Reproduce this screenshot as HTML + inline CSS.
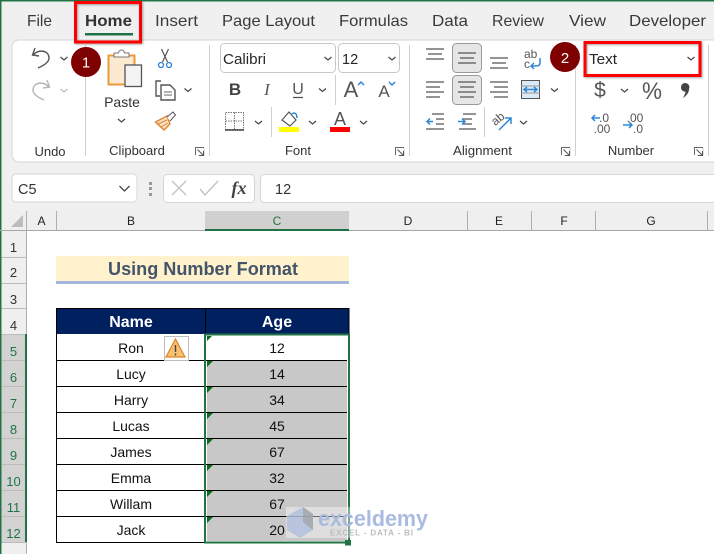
<!DOCTYPE html>
<html><head><meta charset="utf-8"><style>
html,body{margin:0;padding:0;background:#f0f0f0;overflow:hidden}
svg{display:block}
text{font-family:"Liberation Sans",sans-serif;fill:#262626}
.tab{font-size:16px;fill:#3a3a3a}
.lab{font-size:13px;text-anchor:middle;fill:#333}
.hd{font-size:12px;text-anchor:middle;fill:#222}
.rn{font-size:13px;text-anchor:middle;fill:#333}
.rg{font-size:13px;text-anchor:middle;fill:#217346}
.v{font-size:14px;text-anchor:middle;fill:#111}
.ic{fill:none;stroke:#555;stroke-width:1.4}
.bl{fill:none;stroke:#2b88d8;stroke-width:1.5}
</style></head><body>
<svg width="714" height="554" viewBox="0 0 714 554" xmlns="http://www.w3.org/2000/svg">
<defs>
<path id="c" d="M-3.5-1.5 0 1.5 3.5-1.5" fill="none" stroke="#444" stroke-width="1.2"/>
<path id="cg" d="M-3.5-1.5 0 1.5 3.5-1.5" fill="none" stroke="#bbb" stroke-width="1.2"/>
<g id="dl"><path d="M.5 8V.5H9" fill="none" stroke="#666"/><path d="M9 .5V8.5H3" fill="none" stroke="#aaa" stroke-width=".6"/><path d="M2.5 2.5 8.5 8.5M8.5 4V8.5H4" fill="none" stroke="#555"/></g>
<filter id="sh" x="-10%" y="-10%" width="120%" height="125%"><feDropShadow dx="1" dy="1" stdDeviation="1" flood-color="#000" flood-opacity=".35"/></filter>
</defs>
<rect width="714" height="554" fill="#f0f0f0"/>
<rect width="714" height="1.5" fill="#217346"/>
<rect width="1.5" height="554" fill="#217346"/>

<!-- tabs -->
<text class="tab" x="27" y="26" textLength="25" lengthAdjust="spacingAndGlyphs">File</text>
<text class="tab" x="85" y="26" textLength="47" lengthAdjust="spacingAndGlyphs" style="font-weight:bold;fill:#333">Home</text>
<text class="tab" x="155" y="26" textLength="43" lengthAdjust="spacingAndGlyphs">Insert</text>
<text class="tab" x="222" y="26" textLength="93" lengthAdjust="spacingAndGlyphs">Page Layout</text>
<text class="tab" x="339" y="26" textLength="69" lengthAdjust="spacingAndGlyphs">Formulas</text>
<text class="tab" x="432" y="26" textLength="36" lengthAdjust="spacingAndGlyphs">Data</text>
<text class="tab" x="492" y="26" textLength="52" lengthAdjust="spacingAndGlyphs">Review</text>
<text class="tab" x="569" y="26" textLength="37" lengthAdjust="spacingAndGlyphs">View</text>
<text class="tab" x="629" y="26" textLength="77" lengthAdjust="spacingAndGlyphs">Developer</text>
<rect x="85" y="33" width="48" height="2.5" fill="#217346"/>

<!-- ribbon -->
<rect x="12" y="40" width="720" height="122" rx="7" fill="#fff" stroke="#d6d6d6"/>
<g stroke="#cfcfcf"><path d="M85.500 45V156M209.500 45V156M409.500 45V156M575.500 45V156M708.500 45V156M335.500 75V105M271.500 107V137M484.500 107V137"/></g>
<text class="lab" x="50" y="156">Undo</text>
<text class="lab" x="137" y="155">Clipboard</text>
<text class="lab" x="298" y="155">Font</text>
<text class="lab" x="453" y="155" textLength="59" lengthAdjust="spacingAndGlyphs" style="text-anchor:start">Alignment</text>
<text class="lab" x="631" y="155">Number</text>
<use href="#dl" x="195" y="147"/><use href="#dl" x="395" y="147"/><use href="#dl" x="561" y="147"/><use href="#dl" x="694" y="147"/>

<!-- undo/redo -->
<path class="ic" d="M35 48 32.500 55 39 56M33 55C38 49 49 50 49 58 49 62 45 65 38 68"/>
<use href="#c" x="64" y="58.500"/>
<path d="M47 80 49.500 87 43 88M49 87C44 81 33 82 33 90 33 94 37 97 44 100" fill="none" stroke="#b5b5b5" stroke-width="1.4"/>
<use href="#cg" x="64" y="90.500"/>

<!-- paste -->
<rect x="108.500" y="55.500" width="26" height="29" fill="#fbe9d0" stroke="#e89a3c" stroke-width="2"/>
<path d="M114 55V53h4.500a3 3 0 0 1 6 0H129v4h-15z" fill="#fff" stroke="#777"/>
<rect x="125" y="65" width="16.500" height="21.500" fill="#f3f3f3" stroke="#555" stroke-width="1.300"/>
<text class="lab" x="122" y="107" style="font-size:14px">Paste</text>
<use href="#c" x="121.500" y="120.500"/>
<!-- scissors -->
<path d="M161.500 49 167.500 62M168.500 49 162.500 62" stroke="#555" fill="none" stroke-width="1.200"/>
<circle cx="161" cy="65" r="2.500" fill="none" stroke="#2b7cd3" stroke-width="1.300"/><circle cx="169" cy="65" r="2.500" fill="none" stroke="#2b7cd3" stroke-width="1.300"/>
<!-- copy -->
<path class="ic" d="M161 81H156V96H160M165 85H170L175 90V100H161V85z"/><path d="M164 92h8M164 95h8" stroke="#666"/><use href="#c" x="188" y="90"/>
<!-- brush -->
<path d="M155.500 122 167 116 170 124 164 130z" fill="#fbe3c8" stroke="#e0812c" stroke-width="1.400"/>
<path d="M158 124 167 120M161 127 168 123" stroke="#e0812c" stroke-width="1"/>
<path d="M167 117 173 112 175.500 115 170 121" fill="#fff" stroke="#555"/>

<!-- font -->
<rect x="220.500" y="43.500" width="115" height="29" rx="4" fill="#fff" stroke="#c8c8c8"/>
<rect x="338.500" y="43.500" width="61" height="29" rx="4" fill="#fff" stroke="#c8c8c8"/>
<text x="223" y="64" style="font-size:14.500px" textLength="43" lengthAdjust="spacingAndGlyphs">Calibri</text>
<text x="342" y="64" style="font-size:14.500px">12</text>
<use href="#c" x="328" y="58.500"/><use href="#c" x="392" y="58.500"/>
<text x="235" y="95" style="font-size:17px;font-weight:bold;text-anchor:middle;fill:#444">B</text>
<text x="267" y="95" style="font-size:17px;font-style:italic;text-anchor:middle;fill:#555;font-family:'Liberation Serif',serif">I</text>
<text x="298" y="94" style="font-size:16px;text-anchor:middle;fill:#555">U</text>
<path d="M293 97.500h10" stroke="#555" stroke-width="1.300"/>
<use href="#c" x="322.500" y="90"/>
<text x="351" y="97" style="font-size:22px;text-anchor:middle;fill:#555">A</text>
<path d="M358 85 361 82 364 85" class="bl"/>
<text x="384" y="97" style="font-size:17px;text-anchor:middle;fill:#555">A</text>
<path d="M389 82 392 85 395 82" class="bl"/>
<!-- borders -->
<path d="M225.500 112.500h18v17h-18zM234.500 112.500v17M225.500 121h18" fill="none" stroke="#777" stroke-dasharray="1.500 1"/>
<path d="M225 130h19" stroke="#444" stroke-width="1.500"/>
<use href="#c" x="258.500" y="122.500"/>
<path d="M282 120 289 112 296 120 290 126z" fill="#fff" stroke="#555" stroke-width="1.200"/>
<path d="M292 114C294 112 297 113 297 118" class="bl"/>
<rect x="279" y="127" width="20" height="5" fill="#ff0"/>
<use href="#c" x="312.500" y="122.500"/>
<text x="340" y="125" style="font-size:18px;text-anchor:middle;fill:#555">A</text>
<rect x="330" y="127" width="20" height="5" fill="#f00"/>
<use href="#c" x="363.500" y="122.500"/>

<!-- alignment -->
<rect x="452.500" y="43.500" width="29" height="29" rx="4" fill="#e6e6e6" stroke="#999"/>
<rect x="452.500" y="75.500" width="29" height="29" rx="4" fill="#e6e6e6" stroke="#999"/>
<g stroke="#555" stroke-width="1.300" fill="none">
<path d="M426 49h18M428 54h14M426 59h18"/>
<path d="M458 53h18M460 58h14M458 63h18"/>
<path d="M490 58h18M492 63h14M490 68h18"/>
<path d="M426 82h18M426 87h14M426 92h18M426 97h14"/>
<path d="M458 82h18M460 87h14M458 92h18M460 97h14"/>
<path d="M490 82h18M494 87h14M490 92h18M494 97h14"/>
<path d="M432 114h12M436 119h8M436 124h8M426 129h18"/>
<path d="M463 114h13M463 119h9M463 124h9M459 129h17"/>
</g>
<path class="bl" d="M433 121.500h-6M430 118.500l-3 3 3 3"/>
<path class="bl" d="M458 121.500h7M462 118.500l3 3-3 3"/>
<text x="524" y="58" style="font-size:12px;fill:#555">ab</text>
<text x="524" y="68" style="font-size:12px;fill:#555">c</text>
<path class="bl" d="M540 58V63Q540 66 536 66H531M534 63l-3 3 3 3"/>
<rect x="521.500" y="80.500" width="18" height="18" fill="#dbeaf7" stroke="#555"/>
<path d="M521 86h19M521 93h19" stroke="#999"/>
<path class="bl" d="M524 89.500h13M527 87l-3 2.500 3 2.500M534 87l3 2.500-3 2.500"/>
<use href="#c" x="554.500" y="90"/>
<text x="493" y="124" style="font-size:12px;fill:#555" transform="rotate(-40 497 122)">ab</text>
<path class="bl" d="M499 130 511 118M505 118h6v6"/>
<use href="#c" x="523.500" y="122.500"/>

<!-- number -->
<text x="600" y="97" style="font-size:21px;text-anchor:middle;fill:#555">$</text>
<use href="#c" x="624.500" y="90.500"/>
<text x="642" y="99" style="font-size:24px;fill:#555" textLength="20" lengthAdjust="spacingAndGlyphs">%</text>
<path d="M681 87.500a4.200 4.200 0 1 1 8 1.500C689 93 686 96 683 98 684.500 95 685.500 93 685.500 91.700 683 91.700 681 90 681 87.500z" fill="#444"/>
<text x="604" y="122" style="font-size:12px;fill:#555;text-anchor:middle">.0</text>
<text x="602" y="133" style="font-size:12px;fill:#555;text-anchor:middle">.00</text>
<path class="bl" d="M592 118h8M595 115l-3 3 3 3"/>
<text x="635" y="122" style="font-size:12px;fill:#555;text-anchor:middle">.00</text>
<text x="638" y="133" style="font-size:12px;fill:#555;text-anchor:middle">.0</text>
<path class="bl" d="M623 125h9M629 122l3 3-3 3"/>

<!-- number format box -->
<rect x="585" y="43" width="115" height="32" fill="#fff"/>
<text x="589" y="64" style="font-size:14.500px" textLength="28" lengthAdjust="spacingAndGlyphs">Text</text>
<use href="#c" x="691" y="58.500"/>
<rect x="585" y="42.500" width="115" height="33" fill="none" stroke="#f00" stroke-width="3" filter="url(#sh)"/>
<rect x="75.500" y="2.500" width="65" height="39.500" fill="none" stroke="#f00" stroke-width="3" filter="url(#sh)"/>

<!-- badges -->
<circle cx="86" cy="62" r="15" fill="#7f0000"/>
<text x="86" y="67.500" style="font-size:15px;fill:#fff;text-anchor:middle">1</text>
<circle cx="565" cy="57" r="15" fill="#7f0000"/>
<text x="565" y="63" style="font-size:15px;fill:#fff;text-anchor:middle">2</text>

<!-- formula bar -->
<rect x="12" y="174" width="125" height="28" rx="4" fill="#fff" stroke="#d6d6d6"/>
<text x="18" y="194" style="font-size:14.500px;fill:#333">C5</text>
<path d="M119.500 186 124.500 191 129.500 186" fill="none" stroke="#444" stroke-width="1.300"/>
<g fill="#999"><rect x="149" y="182" width="3" height="3"/><rect x="149" y="187" width="3" height="3"/><rect x="149" y="193" width="3" height="3"/></g>
<rect x="163.500" y="174.500" width="91" height="28" rx="4" fill="#fff" stroke="#d6d6d6"/>
<path d="M172 181 186 195M186 181 172 195" stroke="#c4c4c4" stroke-width="1.400" fill="none"/>
<path d="M200 189 205 195 218 181" stroke="#c4c4c4" stroke-width="1.400" fill="none"/>
<text x="239" y="194" style="font-size:18px;font-style:italic;font-weight:bold;text-anchor:middle;fill:#444;font-family:'Liberation Serif',serif">fx</text>
<rect x="260.500" y="174.500" width="470" height="28" rx="4" fill="#fff" stroke="#d6d6d6"/>
<text x="275" y="194" style="font-size:14.500px;fill:#333">12</text>

<!-- sheet -->
<rect x="26" y="231" width="688" height="323" fill="#fff"/>
<rect x="1.500" y="211" width="712.500" height="20" fill="#efefef"/>
<rect x="205" y="211" width="144" height="19" fill="#d0d0d0"/>
<rect x="205" y="229" width="144" height="2" fill="#217346"/>
<path d="M0 230.500H205M349 230.500H714" stroke="#a8a8a8"/>
<g stroke="#b0b0b0"><path d="M26.500 211V554M56.500 211V230M467.500 211V230M531.500 211V230M595.500 211V230M707.500 211V230"/></g>
<path d="M11 227H23V215z" fill="#bcbcbc"/>
<text class="hd" x="41.500" y="225">A</text><text class="hd" x="131" y="225">B</text>
<text class="hd" x="277" y="225" style="fill:#217346">C</text><text class="hd" x="408" y="225">D</text>
<text class="hd" x="499" y="225">E</text><text class="hd" x="564" y="225">F</text><text class="hd" x="651" y="225">G</text>

<!-- row headers -->
<rect x="1.500" y="231" width="24.500" height="323" fill="#efefef"/>
<rect x="1.500" y="334" width="24.500" height="208" fill="#d2d2d2"/>
<rect x="25" y="334" width="2" height="208" fill="#217346"/>
<g stroke="#bcbcbc"><path d="M1.500 257.500H26M1.500 283.500H26M1.500 308.500H26M1.500 334.500H25M1.500 360.500H25M1.500 386.500H25M1.500 412.500H25M1.500 438.500H25M1.500 464.500H25M1.500 490.500H25M1.500 516.500H25M1.500 542.500H26"/></g>
<text class="rn" x="13.500" y="252">1</text><text class="rn" x="13.500" y="277">2</text><text class="rn" x="13.500" y="304">3</text><text class="rn" x="13.500" y="330">4</text>
<text class="rg" x="13.500" y="356">5</text><text class="rg" x="13.500" y="382">6</text><text class="rg" x="13.500" y="408">7</text><text class="rg" x="13.500" y="434">8</text><text class="rg" x="13.500" y="460">9</text><text class="rg" x="13.500" y="486">10</text><text class="rg" x="13.500" y="512">11</text><text class="rg" x="13.500" y="538">12</text>

<!-- title -->
<rect x="56" y="256" width="293" height="26" fill="#fff2cc"/>
<rect x="56" y="281" width="293" height="3" fill="#a4b6dd"/>
<text x="203" y="275" style="font-size:18px;font-weight:bold;text-anchor:middle;fill:#44546a" textLength="190" lengthAdjust="spacingAndGlyphs">Using Number Format</text>

<!-- table -->
<rect x="56" y="308" width="293" height="26" fill="#002060"/>
<path d="M56 308.500H349" stroke="#000"/>
<text x="131" y="327" style="font-size:16px;font-weight:bold;text-anchor:middle;fill:#fff">Name</text>
<text x="277" y="327" style="font-size:16px;font-weight:bold;text-anchor:middle;fill:#fff">Age</text>
<rect x="207" y="360" width="140" height="181" fill="#c8c8c8"/>
<g stroke="#000"><path d="M56.500 308V543M205.500 308V334M349 308V334M56 360.500H347M56 386.500H347M56 412.500H347M56 438.500H347M56 464.500H347M56 490.500H347M56 516.500H347M56 542.500H204"/></g>
<g fill="#0c6b1c"><path d="M207 336h5l-5 5zM207 361h6l-6 6zM207 387h6l-6 6zM207 413h6l-6 6zM207 439h6l-6 6zM207 465h6l-6 6zM207 491h6l-6 6zM207 517h6l-6 6z"/></g>
<text class="v" x="131" y="353">Ron</text><text class="v" x="131" y="379">Lucy</text><text class="v" x="131" y="405">Harry</text><text class="v" x="131" y="431">Lucas</text><text class="v" x="131" y="457">James</text><text class="v" x="131" y="483">Emma</text><text class="v" x="131" y="509">Willam</text><text class="v" x="131" y="535">Jack</text>
<text class="v" x="277" y="353">12</text><text class="v" x="277" y="379">14</text><text class="v" x="277" y="405">34</text><text class="v" x="277" y="431">45</text><text class="v" x="277" y="457">67</text><text class="v" x="277" y="483">32</text><text class="v" x="277" y="509">67</text><text class="v" x="277" y="535">20</text>

<!-- warning -->
<rect x="164.500" y="336.500" width="24" height="24" fill="#fff" stroke="#bdbdbd"/>
<path d="M175.500 339 185 357H166z" fill="#f8c070" stroke="#e0812c" stroke-width="1.200"/>
<path d="M175.500 345V352M175.500 353.500V355.500" stroke="#444" stroke-width="1.400"/>

<!-- selection -->
<rect x="205" y="334.500" width="144" height="208" fill="none" stroke="#217346" stroke-width="2"/>
<rect x="345" y="540" width="6" height="5.500" fill="#217346"/>

<!-- watermark -->
<rect x="286" y="507" width="142" height="31" fill="#fff" fill-opacity=".4"/>
<path d="M287 516 303 507 313 514V530L300 538 287 530z" fill="#a9bbdc" fill-opacity=".7"/>
<path d="M303 507 313 514V530L303 522z" fill="#9a9a9a" fill-opacity=".6"/>
<text x="318" y="526" style="font-size:22px;font-weight:bold;fill:#a9bbe0" textLength="110" lengthAdjust="spacingAndGlyphs">exceldemy</text>
<text x="330" y="535.500" style="font-size:8px;font-weight:bold;fill:#bdbdbd" textLength="83">EXCEL - DATA - BI</text>
</svg>
</body></html>
